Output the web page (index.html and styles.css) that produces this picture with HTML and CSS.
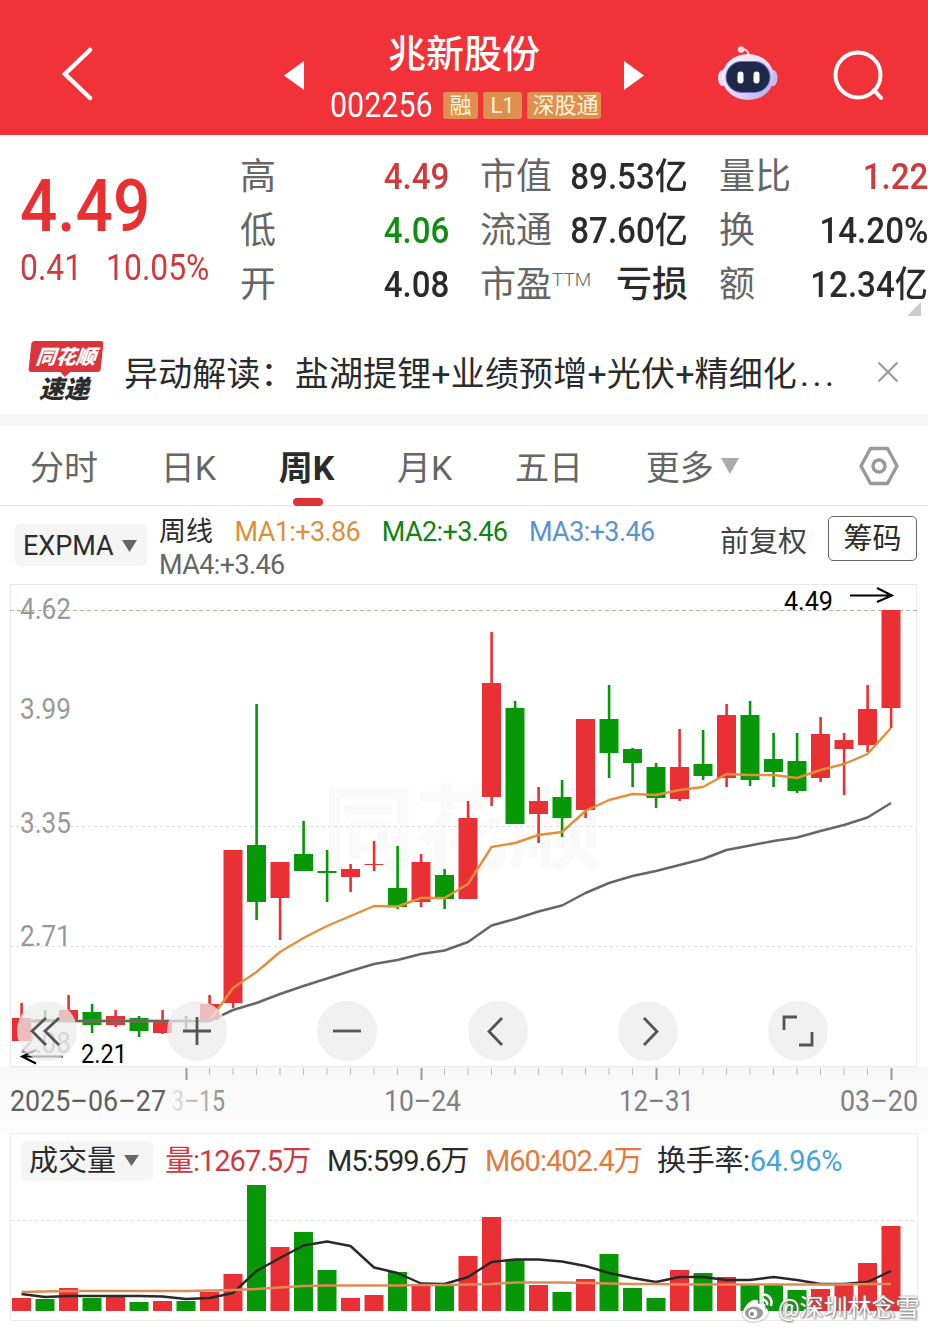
FILE: index.html
```html
<!DOCTYPE html>
<html lang="zh-CN">
  <head>
    <meta charset="UTF-8" />
    <meta name="viewport" content="width=device-width, initial-scale=1.0" />
    <title>兆新股份 002256</title>
    <link rel="stylesheet" href="styles.css">
  </head>
  <body>
    <header class="top-bar">
      <svg class="back-icon" width="34" height="56" viewBox="0 0 34 56"><path d="M30 5 5 29 30 53" /></svg>
      <svg class="prev-icon" width="20" height="30" viewBox="0 0 20 30"><path d="M20 0v29L0 14.5z" /></svg>
      <div class="stock-title">
        <h1>兆新股份</h1>
        <div class="stock-code">
          <span class="code">002256</span>
          <span class="tag">融</span>
          <span class="tag tag-l1">L1</span>
          <span class="tag tag-sgt">深股通</span>
        </div>
      </div>
      <svg class="next-icon" width="20" height="30" viewBox="0 0 20 30"><path d="M0 0v29L20 14.5z" /></svg>
      <svg class="robot-icon" width="62" height="58" viewBox="0 0 62 58">
        <defs>
          <linearGradient id="robot-head" x1="0" y1="0" x2="1" y2="1">
            <stop offset="0" stop-color="#fff4fa" />
            <stop offset=".55" stop-color="#ecd9f7" />
            <stop offset="1" stop-color="#a9a4f0" />
          </linearGradient>
        </defs>
        <path d="M24 4.500q7-1 8 6" fill="none" stroke="#fbd9e8" stroke-width="2" />
        <circle cx="24" cy="4.500" r="3.200" fill="#fbd9e8" />
        <ellipse cx="5.500" cy="33" rx="4.500" ry="8" fill="#eddcf8" />
        <ellipse cx="56" cy="33" rx="4.500" ry="8" fill="#c3bdf5" />
        <ellipse cx="31" cy="32" rx="26" ry="23" fill="url(#robot-head)" />
        <rect x="8.500" y="16" width="45" height="32" rx="16" fill="#6f72dc" />
        <rect x="9.500" y="17" width="43" height="30" rx="15" fill="#1e2847" />
        <rect x="20.500" y="26.500" width="6" height="12" rx="3" fill="#fff" />
        <rect x="36.500" y="26.500" width="6" height="12" rx="3" fill="#fff" />
      </svg>
      <svg class="search-icon" width="52" height="52" viewBox="0 0 52 52"><circle cx="25" cy="25" r="22.500" /><path d="M41 40l7 8" /></svg>
    </header>

    <section class="quote">
      <div class="quote-price">
        <div class="price">4.49</div>
        <div class="change"><span>0.41</span><span>10.05%</span></div>
      </div>
      <dl class="quote-col col-high">
        <div><dt>高</dt><dd class="up">4.49</dd></div>
        <div><dt>低</dt><dd class="down">4.06</dd></div>
        <div><dt>开</dt><dd>4.08</dd></div>
      </dl>
      <dl class="quote-col col-cap">
        <div><dt>市值</dt><dd>89.53亿</dd></div>
        <div><dt>流通</dt><dd>87.60亿</dd></div>
        <div><dt>市盈<sup>TTM</sup></dt><dd class="loss">亏损</dd></div>
      </dl>
      <dl class="quote-col col-vol">
        <div><dt>量比</dt><dd class="up">1.22</dd></div>
        <div><dt>换</dt><dd>14.20%</dd></div>
        <div><dt>额</dt><dd>12.34亿</dd></div>
      </dl>
      <i class="corner"></i>
    </section>

    <section class="news">
      <div class="news-logo">
        <span class="logo-top">同花顺</span>
        <span class="logo-bottom">速递</span>
      </div>
      <p>异动解读：盐湖提锂+业绩预增+光伏+精细化<span class="dots">...</span></p>
      <svg class="close-icon" width="22" height="22" viewBox="0 0 22 22"><path d="M1.500 1.500l19 19M20.500 1.500l-19 19" /></svg>
    </section>

    <nav class="tabs">
      <a>分时</a>
      <a>日K</a>
      <a class="active">周K</a>
      <a>月K</a>
      <a>五日</a>
      <a>更多<svg width="18" height="16" viewBox="0 0 18 16"><path d="M0 0h18L9 16z" /></svg></a>
      <svg class="setting-icon" width="40" height="40" viewBox="0 0 40 40"><path d="M11.500 2.500h17L38 20l-9.500 17.500h-17L2 20z" /><circle cx="20" cy="20" r="6" /></svg>
    </nav>

    <section class="indicator">
      <button class="select">EXPMA<svg width="15" height="12" viewBox="0 0 15 12"><path d="M0 0h15L7.500 12z" /></svg></button>
      <div class="ma-list">
        <span class="ma0">周线</span>
        <span class="ma1">MA1:+3.86</span>
        <span class="ma2">MA2:+3.46</span>
        <span class="ma3">MA3:+3.46</span>
        <span class="ma4">MA4:+3.46</span>
      </div>
      <span class="fuquan">前复权</span>
      <button class="chips">筹码</button>
    </section>

    <section class="kline">
      <svg id="kline-chart" width="928" height="549" viewBox="0 584 928 549">
        <defs>
          <linearGradient id="axis-bg" x1="0" y1="0" x2="0" y2="1">
            <stop offset="0" stop-color="#f7f7f7" />
            <stop offset="1" stop-color="#fdfdfd" />
          </linearGradient>
          <linearGradient id="date-fade">
            <stop offset="0" stop-color="#f2f2f2" />
            <stop offset=".15" stop-color="#d8d8d8" />
            <stop offset="1" stop-color="#8c8c8c" />
          </linearGradient>
        </defs>
        <rect x="0" y="1067" width="928" height="66" fill="url(#axis-bg)" />
        <rect x="10.500" y="584.500" width="906" height="482" fill="#fff" stroke="#e9e9e9" />
        <text class="brand-mark" x="322" y="862" textLength="280" lengthAdjust="spacingAndGlyphs">同花顺</text>
        <path class="grid-top" d="M10 610.500h907" />
        <path class="grid" d="M10 826.500h907M10 946.500h907" />
        <g class="price-label">
          <text x="20" y="619" textLength="51" lengthAdjust="spacingAndGlyphs">4.62</text>
          <text x="20" y="719" textLength="51" lengthAdjust="spacingAndGlyphs">3.99</text>
          <text x="20" y="833" textLength="51" lengthAdjust="spacingAndGlyphs">3.35</text>
          <text x="20" y="946" textLength="51" lengthAdjust="spacingAndGlyphs">2.71</text>
          <text x="20" y="1053" textLength="51" lengthAdjust="spacingAndGlyphs">2.08</text>
        </g>
        <g id="candles"></g>
        <g class="mark">
          <text x="784" y="610" textLength="49" lengthAdjust="spacingAndGlyphs">4.49</text>
          <path d="M850 595.500h41M877 588l15 7.500-15 6.500" />
          <text x="81" y="1063" textLength="46" lengthAdjust="spacingAndGlyphs">2.21</text>
          <path d="M63 1056.500H22M36 1050l-14 6.500 14 7" />
        </g>
        <g id="ticks"></g>
        <g class="date">
          <text x="171" y="1111" textLength="54" lengthAdjust="spacingAndGlyphs" fill="url(#date-fade)">3–15</text>
          <text class="dark" x="10" y="1111" textLength="156" lengthAdjust="spacingAndGlyphs">2025–06–27</text>
          <text x="384" y="1111" textLength="77" lengthAdjust="spacingAndGlyphs">10–24</text>
          <text x="619" y="1111" textLength="75" lengthAdjust="spacingAndGlyphs">12–31</text>
          <text x="840" y="1111" textLength="78" lengthAdjust="spacingAndGlyphs">03–20</text>
        </g>
      </svg>
      <div class="chart-tools">
        <button><svg viewBox="0 0 60 60"><path d="M42 17 28 30l14 14M29 17 15 30l14 14" /></svg></button>
        <button><svg viewBox="0 0 60 60"><path d="M30 16v28M16 30h28" /></svg></button>
        <button><svg viewBox="0 0 60 60"><path d="M16 30h28" /></svg></button>
        <button><svg viewBox="0 0 60 60"><path d="M34 17 21 30.500 34 44" /></svg></button>
        <button><svg viewBox="0 0 60 60"><path d="M26 17l13 13.500L26 44" /></svg></button>
        <button><svg viewBox="0 0 60 60"><path d="M16 29V16h13M44 31v13H31" /></svg></button>
      </div>
    </section>

    <section class="volume">
      <div class="volume-head">
        <button class="select">成交量<svg width="15" height="11" viewBox="0 0 15 11"><path d="M0 0h15L7.500 11z" /></svg></button>
        <span class="vol">量:1267.5万</span>
        <span class="m5">M5:599.6万</span>
        <span class="m60">M60:402.4万</span>
        <span class="turnover">换手率:<b>64.96%</b></span>
      </div>
      <svg id="volume-chart" width="906" height="137" viewBox="11 1183 906 137">
        <path class="grid" d="M11 1220.500h906" />
        <g id="volumes"></g>
      </svg>
    </section>

    <div class="weibo-mark">
      <svg width="34" height="32" viewBox="0 0 34 32">
        <path d="M14 8c3-1 5 0 4 4 5-2 9 0 7 4 4 1 4 5 1 9-6 6-18 6-22 1C0 20 7 10 14 8z" fill="#fff" />
        <ellipse cx="14" cy="21" rx="9" ry="6.500" fill="#999" />
        <circle cx="13" cy="21.500" r="4.500" fill="#fff" />
        <circle cx="12" cy="22" r="2" fill="#888" />
        <path d="M21 3c7-2 12 4 10 11M22 8c3-1 6 2 5 5" fill="none" stroke="#fff" stroke-width="2.400" />
      </svg>
      <span>@深圳林念雪</span>
    </div>

    <script>
      const STEP = 23.5;
      const FIRST = 21.5;

      // [up / down, high, body top, body bottom, low, volume top]
      const weeks = [
        ["r", 1003, 1018, 1041, 1041, 1298],
        ["g", 1010, 1019, 1022, 1022, 1299],
        ["r", 995, 1010, 1022, 1022, 1288],
        ["g", 1004, 1012, 1025, 1033, 1298],
        ["r", 1010, 1016, 1025, 1027, 1295],
        ["g", 1016, 1018, 1031, 1037, 1302],
        ["r", 1010, 1021, 1033, 1034, 1301],
        ["g", 1016, 1020, 1022, 1029, 1301],
        ["r", 995, 1004, 1020, 1020, 1292],
        ["r", 850, 850, 1003, 1008, 1274],
        ["g", 704, 845, 902, 920, 1185],
        ["r", 862, 862, 898, 940, 1247],
        ["g", 821, 854, 871, 871, 1232],
        ["g", 850, 871, 873, 902, 1270],
        ["r", 864, 869, 877, 892, 1298],
        ["r", 841, 864, 865, 871, 1295],
        ["g", 846, 888, 907, 909, 1272],
        ["r", 854, 862, 902, 907, 1285],
        ["g", 869, 875, 899, 909, 1285],
        ["r", 801, 818, 899, 899, 1256],
        ["r", 632, 683, 797, 806, 1217],
        ["g", 701, 708, 824, 824, 1260],
        ["r", 787, 801, 814, 843, 1285],
        ["g", 780, 797, 818, 837, 1292],
        ["r", 719, 719, 810, 818, 1279],
        ["g", 685, 719, 753, 778, 1254],
        ["g", 748, 749, 763, 787, 1288],
        ["g", 763, 767, 798, 808, 1298],
        ["r", 729, 767, 799, 801, 1270],
        ["g", 730, 764, 776, 780, 1273],
        ["r", 704, 715, 778, 787, 1277],
        ["g", 701, 715, 780, 786, 1285],
        ["g", 733, 759, 772, 787, 1285],
        ["g", 733, 761, 791, 793, 1290],
        ["r", 717, 734, 778, 782, 1289],
        ["r", 733, 740, 749, 795, 1285],
        ["r", 685, 709, 745, 752, 1263],
        ["r", 610, 610, 708, 728, 1226]
      ];

      const ma1 = [1021, 1021, 1021, 1021, 1021, 1021, 1021, 1021, 1021, 988, 972, 952, 938, 926, 916, 906, 906.5, 898, 898, 884, 847, 843, 835, 832, 811, 800, 794, 795, 790, 787, 774, 775, 775, 778, 770, 764, 754, 728];
      const ma4 = [1021, 1021, 1021, 1021, 1021, 1021, 1021, 1021, 1021, 1010, 1003, 994, 986, 978.5, 971, 964, 960, 954, 950.5, 942, 925.5, 919, 911.5, 905.5, 893, 883, 876, 871, 865, 859, 850, 845.5, 841, 837.5, 831, 825, 817.5, 803];
      const m5 = [1294, 1297, 1296, 1296, 1296, 1296, 1296.5, 1299, 1298, 1293, 1271, 1258, 1245.5, 1241.5, 1246, 1267.5, 1273, 1283.5, 1284, 1277, 1262, 1259.5, 1259.5, 1261.5, 1266, 1273, 1278, 1282, 1277, 1277, 1280, 1280, 1277, 1280, 1284, 1284, 1282, 1271];
      const m60 = [1292, 1291.5, 1291, 1291, 1291, 1291, 1291, 1291, 1290.5, 1290, 1289, 1287.5, 1286, 1285.5, 1285.5, 1285.5, 1285.5, 1285, 1285, 1284.5, 1284, 1282.5, 1282.5, 1282.5, 1283, 1283.5, 1284, 1284, 1284.5, 1284.5, 1284.5, 1284.5, 1284.5, 1284.5, 1284.5, 1284.5, 1284, 1284];

      const x = (i) => FIRST + i * STEP;
      const line = (data, cls) =>
        `<polyline class="${cls}" points="${data.map((y, i) => x(i) + "," + y).join(" ")}" />`;

      let candles = "";
      let volumes = "";
      weeks.forEach(([c, high, top, bottom, low, vol], i) => {
        candles += `<rect class="${c}" x="${x(i) - 1.2}" y="${high}" width="2.6" height="${low - high}" />`;
        candles += `<rect class="${c}" x="${x(i) - 9.5}" y="${top}" width="19" height="${bottom - top}" />`;
        volumes += `<rect class="${c}" x="${x(i) - 9.5}" y="${vol}" width="19" height="${1311 - vol}" />`;
      });
      document.getElementById("candles").innerHTML = candles + line(ma1, "line-ma1") + line(ma4, "line-ma4");
      document.getElementById("volumes").innerHTML = volumes + line(m5, "line-m5") + line(m60, "line-m60");

      // Week ticks under the chart, longer at labelled dates
      let ticks = "";
      for (let i = 7; i <= 37; i++) {
        const major = [7, 17, 27, 37].includes(i);
        ticks += `<rect class="${major ? "major" : "minor"}" x="${x(i) - 0.5}" y="1068" width="${major ? 2 : 1}" height="${major ? 12 : 7}" />`;
      }
      document.getElementById("ticks").innerHTML = ticks;
    </script>
  </body>
</html>
```
FILE: styles.css
```css
* {
  margin: 0;
  padding: 0;
  box-sizing: border-box;
}

body {
  width: 928px;
  height: 1330px;
  position: relative;
  overflow: hidden;
  background: #fff;
  color: #2b2b2b;
  font-family: Roboto, "Noto Sans CJK SC", sans-serif;
}

button {
  border: none;
  font: inherit;
  color: inherit;
}

svg {
  display: block;
  flex: none;
}

/* Header */
.top-bar {
  height: 135px;
  background: #f13239;
  color: #fff;
  display: flex;
  align-items: flex-start;
}

.back-icon {
  margin: 45px 0 0 60px;
  fill: none;
  stroke: #fff;
  stroke-width: 4.5;
  stroke-linecap: round;
}

.prev-icon,
.next-icon {
  margin-top: 61px;
  fill: #fff;
}

.prev-icon {
  margin-left: 190px;
}

.stock-title {
  width: 320px;
  padding: 29px 0 0 26px;
}

.stock-title h1 {
  font-size: 38px;
  line-height: 50px;
  font-weight: 500;
  padding-left: 58px;
}

.stock-code {
  display: flex;
  align-items: center;
  height: 52px;
}

.code {
  width: 113px;
  font-size: 35px;
  transform: scaleX(0.87);
  transform-origin: left;
}

.tag {
  width: 35px;
  height: 27px;
  margin-right: 5px;
  border-radius: 3px;
  background: #e0904e;
  color: #fff3dc;
  font-size: 22px;
  line-height: 28px;
  text-align: center;
}

.tag-l1 {
  width: 39px;
}

.tag-sgt {
  width: 74px;
  padding-left: 3px;
  margin-right: 0;
}

.robot-icon {
  margin: 45px 0 0 73px;
}

.search-icon {
  margin: 50px 0 0 54px;
  fill: none;
  stroke: #fff;
  stroke-width: 4;
  stroke-linecap: round;
}

/* Quote */
.quote {
  height: 190px;
  position: relative;
  display: flex;
}

.quote-price {
  width: 240px;
  padding: 35px 0 0 20px;
  color: #e93030;
  white-space: nowrap;
}

.price {
  font-size: 73px;
  line-height: 72px;
  font-weight: 500;
  transform: scaleX(0.9);
  transform-origin: left;
}

.change {
  display: flex;
  gap: 28px;
  font-size: 37px;
  line-height: 51px;
  color: #cf3a3d;
  transform: scaleX(0.86);
  transform-origin: left;
}

.quote-col {
  padding-top: 15px;
}

.quote-col > div {
  display: flex;
  justify-content: space-between;
  height: 54px;
  line-height: 54px;
  font-size: 36px;
}

.quote-col dt {
  color: #666;
}

.quote-col dd {
  font-weight: 500;
  transform: scaleX(0.92);
  transform-origin: right;
}

.quote-col .loss {
  transform: none;
}

.quote-col sup {
  display: inline-block;
  font-size: 19px;
  font-weight: 300;
  line-height: 20px;
  vertical-align: 11px;
}

.col-high {
  width: 209px;
}

.col-cap {
  width: 208px;
  margin-left: 31px;
}

.col-vol {
  width: 209px;
  margin-left: 31px;
}

.quote-col .up {
  color: #cf3a3d;
}

.quote-col .down {
  color: #128c12;
}

.corner {
  position: absolute;
  right: 7px;
  bottom: 9px;
  border-bottom: 14px solid #ccc;
  border-left: 14px solid transparent;
}

/* News line */
.news {
  height: 101px;
  padding: 0 29px 0 30px;
  border-bottom: 12px solid #f6f6f6;
  display: flex;
  align-items: center;
}

.news-logo {
  width: 94px;
  padding-top: 3px;
  font-family: "Noto Sans CJK SC", sans-serif;
  font-weight: 900;
  font-style: italic;
}

.logo-top,
.logo-bottom {
  display: block;
  width: 72px;
  text-align: center;
}

.logo-top {
  height: 31px;
  position: relative;
  border-radius: 3px;
  background: #d9353b;
  color: #fff;
  font-size: 20px;
  line-height: 30px;
  transform: skewX(-6deg);
}

.logo-top::after {
  content: "";
  position: absolute;
  left: 32px;
  top: 31px;
  border-top: 5px solid #d9353b;
  border-left: 5px solid transparent;
  border-right: 5px solid transparent;
}

.logo-bottom {
  padding-right: 4px;
  font-size: 25px;
  line-height: 30px;
}

.news p {
  flex: 1;
  padding-top: 4px;
  font-size: 34px;
  letter-spacing: 0.15px;
  white-space: nowrap;
}

.dots {
  margin-left: 3px;
  letter-spacing: 3.5px;
}

.close-icon {
  margin-top: 4px;
  stroke: #999;
  stroke-width: 2.2;
}

/* Period tabs */
.tabs {
  height: 80px;
  padding: 0 29px 0 30px;
  border-bottom: 1px solid #e6e6e6;
  display: flex;
  align-items: center;
  gap: 62.7px;
  color: #666;
  font-size: 34px;
}

.tabs a {
  display: flex;
  align-items: center;
  height: 80px;
  position: relative;
  white-space: nowrap;
}

.tabs a svg {
  margin-left: 7px;
  fill: #aaa;
}

.tabs .active {
  color: #2b2b2b;
  font-weight: 700;
}

.tabs .active::after {
  content: "";
  position: absolute;
  left: 14px;
  bottom: 0;
  width: 30px;
  height: 8px;
  border-radius: 4px;
  background: #dc3337;
}

.setting-icon {
  margin-left: auto;
  fill: none;
  stroke: #999;
  stroke-width: 3.4;
  stroke-linejoin: round;
}

/* Indicator row */
.indicator {
  height: 78px;
  padding: 10px 11px 0 15px;
  display: flex;
  align-items: flex-start;
}

.select {
  width: 132px;
  height: 42px;
  flex: none;
  padding-left: 8px;
  border-radius: 5px;
  background: #f5f5f5;
  display: flex;
  align-items: center;
  font-size: 28px;
}

.select svg {
  margin-left: 8px;
  fill: #666;
}

.indicator .select {
  margin-top: 8px;
  padding-top: 2px;
  font-size: 27px;
}

.ma-list {
  width: 573px;
  flex: none;
  padding-left: 12px;
  display: flex;
  flex-wrap: wrap;
  column-gap: 21.5px;
  font-size: 27px;
  line-height: 33px;
}

.ma-list span:not(.ma0) {
  letter-spacing: -0.6px;
}

.ma1 {
  color: #dd903b;
}

.ma2 {
  color: #138413;
}

.ma3 {
  color: #5a93cd;
}

.ma4 {
  color: #666;
}

.fuquan {
  width: 108px;
  flex: none;
  font-size: 29px;
  line-height: 52px;
  color: #444;
}

.chips {
  width: 89px;
  height: 45px;
  flex: none;
  border: 1.5px solid #666;
  border-radius: 5px;
  background: #fff;
  font-size: 29px;
  line-height: 44px;
}

/* Candle chart */
.kline {
  height: 549px;
  position: relative;
}

.kline text {
  font-size: 29px;
}

.kline .brand-mark {
  font-size: 92px;
  font-weight: 700;
  fill: #fafafa;
}

.grid-top {
  stroke: #b3b39c;
  stroke-dasharray: 4 3;
}

.grid {
  stroke: #dedede;
  stroke-dasharray: 3 3;
}

.price-label {
  fill: #999;
}

.mark {
  fill: #000;
}

.kline .mark text {
  font-size: 26px;
}

.mark path {
  fill: none;
  stroke: #000;
  stroke-width: 2;
}

.date {
  fill: #808080;
}

.date .dark {
  fill: #606060;
}

.r {
  fill: #e93135;
}

.g {
  fill: #069806;
}

.minor {
  fill: #bbb;
}

.major {
  fill: #999;
}

polyline {
  fill: none;
  stroke-width: 2.4;
  stroke-linejoin: round;
}

.line-ma1 {
  stroke: #e39139;
}

.line-ma4 {
  stroke: #666;
  stroke-width: 2.5;
}

.line-m5 {
  stroke: #292929;
}

.line-m60 {
  stroke: #e28a56;
}

.chart-tools {
  position: absolute;
  top: 417px;
  left: 17px;
  display: flex;
  gap: 90.2px;
}

.chart-tools button {
  width: 60px;
  height: 60px;
  border-radius: 50%;
  background: rgba(236, 236, 236, 0.75);
}

.chart-tools path {
  fill: none;
  stroke: #555;
  stroke-width: 2.8;
}

/* Volume */
.volume {
  height: 188px;
  margin: 0 10px;
  border: 1px solid #ececec;
}

.volume-head {
  height: 49px;
  padding: 4px 0 0 10px;
  display: flex;
  align-items: center;
  font-size: 29px;
  line-height: 40px;
  white-space: nowrap;
}

.volume-head .select {
  height: 40px;
  font-size: 29px;
}

.volume-head span {
  letter-spacing: -1px;
}

.vol {
  width: 162px;
  margin-left: 12px;
  color: #cf3a40;
}

.m5 {
  width: 158px;
}

.m60 {
  width: 172px;
  color: #e2793e;
}

.turnover b {
  color: #45a5d9;
  font-weight: 400;
  letter-spacing: -0.3px;
}

.volume-head .turnover {
  letter-spacing: -0.3px;
}

/* Watermark of the poster */
.weibo-mark {
  position: absolute;
  left: 740px;
  top: 1291px;
  display: flex;
  align-items: center;
  color: #fff;
  font-size: 24px;
  line-height: 34px;
  white-space: nowrap;
  text-shadow: 0 0 2px #777, 1px 1px 2px #777;
}

.weibo-mark svg {
  margin-right: 4px;
  filter: drop-shadow(0 0 1px #777);
}
```
